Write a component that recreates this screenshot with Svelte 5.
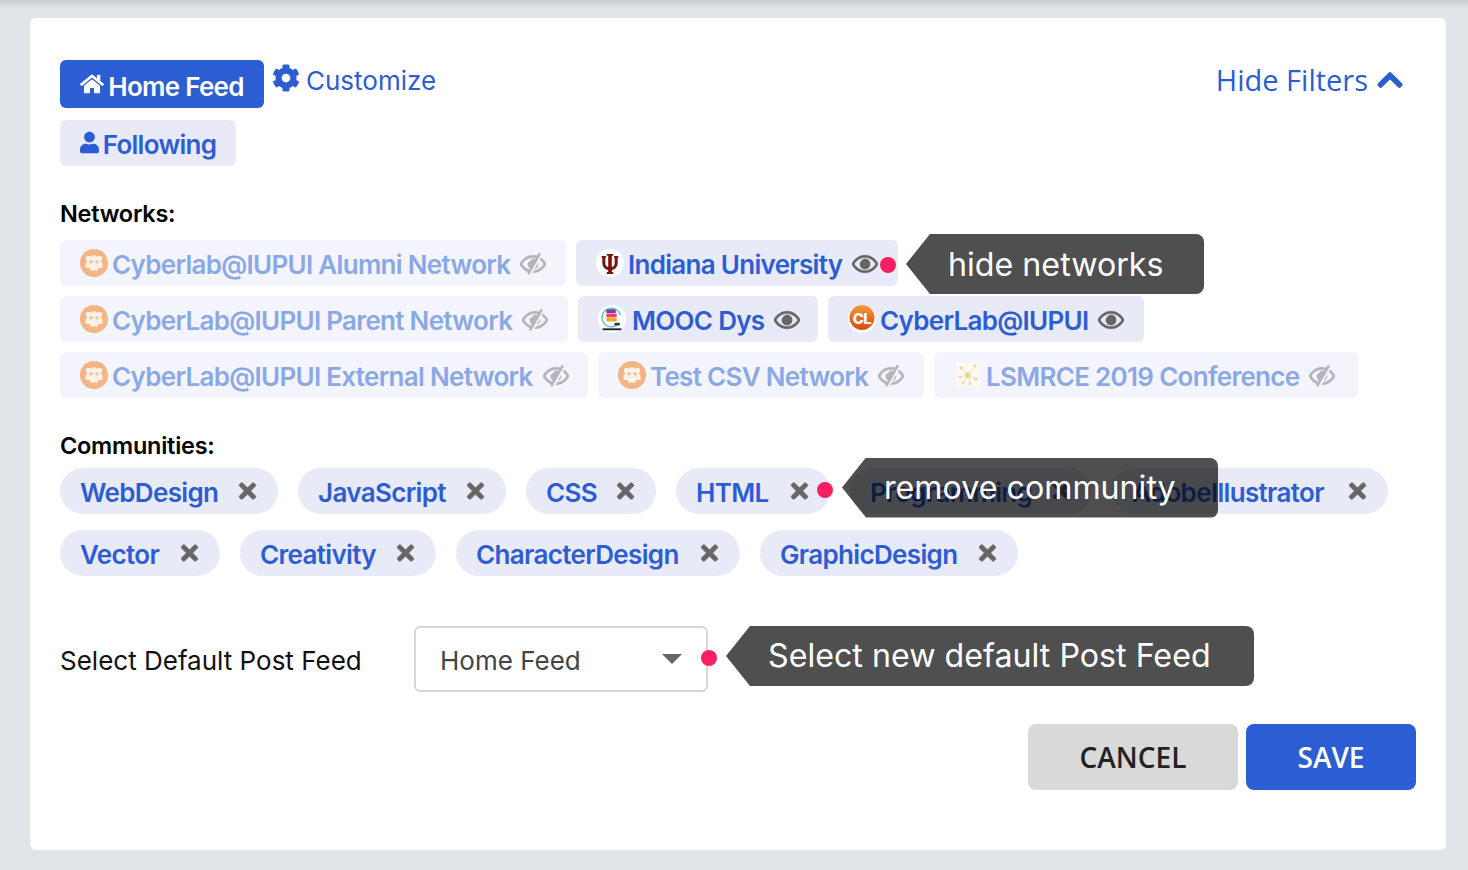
<script>
  const networksRows = [
    [
      { name: 'Cyberlab@IUPUI Alumni Network', logo: 'group', off: true, w: 506 },
      { name: 'Indiana University', logo: 'iu', off: false, w: 322, dot: true }
    ],
    [
      { name: 'CyberLab@IUPUI Parent Network', logo: 'group', off: true, w: 508 },
      { name: 'MOOC Dys', logo: 'mooc', off: false, w: 240 },
      { name: 'CyberLab@IUPUI', logo: 'cl', off: false, w: 316 }
    ],
    [
      { name: 'CyberLab@IUPUI External Network', logo: 'group', off: true, w: 528 },
      { name: 'Test CSV Network', logo: 'group', off: true, w: 326 },
      { name: 'LSMRCE 2019 Conference', logo: 'lsm', off: true, w: 424 }
    ]
  ];
  const communityRows = [
    [
      { name: 'WebDesign', w: 218 },
      { name: 'JavaScript', w: 208 },
      { name: 'CSS', w: 130 },
      { name: 'HTML', w: 154 },
      { name: 'Programming', w: 242 },
      { name: 'AdobeIllustrator', w: 276 }
    ],
    [
      { name: 'Vector', w: 160 },
      { name: 'Creativity', w: 196 },
      { name: 'CharacterDesign', w: 284 },
      { name: 'GraphicDesign', w: 258 }
    ]
  ];
  const eyePath = 'M288 144a110.94 110.94 0 0 0-31.24 5 55.4 55.4 0 0 1 7.24 27 56 56 0 0 1-56 56 55.4 55.4 0 0 1-27-7.24A111.71 111.71 0 1 0 288 144zm284.52 97.4C518.29 135.59 410.93 64 288 64S57.68 135.64 3.48 241.41a32.35 32.35 0 0 0 0 29.19C57.71 376.41 165.07 448 288 448s230.32-71.64 284.52-177.41a32.35 32.35 0 0 0 0-29.19zM288 400c-98.65 0-189.09-55-237.93-144C98.91 167 189.34 112 288 112s189.09 55 237.93 144C477.1 345 386.66 400 288 400z';
</script>

{#snippet logo(kind)}
  {#if kind === 'group'}
    <svg class="logo" viewBox="0 0 28 28">
      <circle cx="14" cy="14" r="14" fill="#f2b583" />
      <g fill="#fdf1e6">
        <circle cx="8.500" cy="9.500" r="2.700" /><circle cx="19.500" cy="9.500" r="2.700" />
        <path d="M5.500 19v-4c0-1.800 1.300-2.800 3-2.800.5 0 1 .1 1.500.3V19zM22.500 19v-4c0-1.800-1.300-2.800-3-2.800-.5 0-1 .1-1.500.3V19z" />
        <circle cx="14" cy="9.500" r="3.300" />
        <path d="M10 21.500v-5c0-2.300 1.700-3.500 4-3.500s4 1.200 4 3.500v5z" />
      </g>
    </svg>
  {:else if kind === 'iu'}
    <svg class="logo" viewBox="0 0 28 28">
      <circle cx="14" cy="14" r="14" fill="#fff" />
      <g fill="none" stroke="#7d110c">
        <path stroke-width="3.600" d="M14 6v18" />
        <path stroke-width="3" d="M7.800 7.500V14c0 3.500 2.500 5.800 6.200 5.800s6.200-2.300 6.200-5.800V7.500" />
        <path stroke-width="1.800" d="M10.800 5.800h6.400M5.600 7.800h4.400M18 7.800h4.400M10.800 24h6.400" />
      </g>
    </svg>
  {:else if kind === 'mooc'}
    <svg class="logo mooc" viewBox="0 0 30 30">
      <circle cx="15" cy="15" r="15" fill="#fff" />
      <path d="M21 21A10 10 0 1 1 24 11" fill="none" stroke="#69bfd3" stroke-width="1.500" />
      <rect x="9" y="4.500" width="10" height="4.200" rx="1" fill="#7e3f8c" />
      <rect x="9" y="9" width="11" height="4.200" rx="1" fill="#e8417b" />
      <rect x="9" y="13.500" width="11" height="4.200" rx="1" fill="#f4a62a" />
      <rect x="17.500" y="19" width="6" height="3" rx="1.500" fill="#2b3a55" />
      <rect x="5" y="25" width="20" height="2" fill="#222" />
    </svg>
  {:else if kind === 'cl'}
    <svg class="logo" viewBox="0 0 28 28">
      <defs>
        <linearGradient id="clg" x1="0" y1="0" x2="0" y2="1">
          <stop offset="0" stop-color="#f29a3a" />
          <stop offset="1" stop-color="#d9480f" />
        </linearGradient>
      </defs>
      <circle cx="14" cy="14" r="14" fill="#fff" />
      <circle cx="14" cy="12.500" r="12.500" fill="url(#clg)" />
      <text x="14" y="18.500" text-anchor="middle" class="cl">CL</text>
    </svg>
  {:else}
    <svg class="logo lsm" viewBox="0 0 28 28">
      <rect x="2" y="2" width="24" height="24" fill="#fbfaf2" />
      <g stroke="#efe3bd" stroke-width="1">
        <path d="M14 14L7 7M14 14L21 5M14 14L6 16M14 14L22 18M14 14L9 22M14 14L16 23" />
      </g>
      <g fill="#efd699">
        <circle cx="14" cy="14" r="3" /><circle cx="7" cy="7" r="1.800" /><circle cx="21" cy="5" r="1.600" />
        <circle cx="6" cy="16" r="1.400" /><circle cx="22" cy="18" r="1.800" /><circle cx="9" cy="22" r="1.400" /><circle cx="16" cy="23" r="1.400" />
      </g>
    </svg>
  {/if}
{/snippet}

<div class="shade"></div>
<main class="card">
  <header class="top">
    <div class="tabs">
      <div class="tabline">
        <button class="tab active">
          <svg class="home" viewBox="0 0 576 512"><path fill="currentColor" d="M280.37 148.26L96 300.11V464a16 16 0 0 0 16 16l112.06-.29a16 16 0 0 0 15.92-16V368a16 16 0 0 1 16-16h64a16 16 0 0 1 16 16v95.64a16 16 0 0 0 16 16.05L464 480a16 16 0 0 0 16-16V300L295.67 148.26a12.19 12.19 0 0 0-15.3 0zM571.6 251.47L488 182.56V44.05a12 12 0 0 0-12-12h-56a12 12 0 0 0-12 12v72.61L318.47 43a48 48 0 0 0-61 0L4.34 251.47a12 12 0 0 0-1.6 16.9l25.5 31A12 12 0 0 0 45.15 301l235.22-193.74a12.19 12.19 0 0 1 15.3 0L530.9 301a12 12 0 0 0 16.9-1.6l25.5-31a12 12 0 0 0-1.7-16.93z" /></svg>
          <span>Home Feed</span>
        </button>
        <a class="customize" href="#customize">
          <svg class="cog" viewBox="0 0 512 512"><path fill="currentColor" d="M487.4 315.7l-42.6-24.6c4.3-23.2 4.3-47 0-70.2l42.6-24.6c4.9-2.8 7.1-8.6 5.5-14-11.1-35.6-30-67.8-54.7-94.6-3.8-4.1-10-5.1-14.8-2.3L380.8 110c-17.9-15.4-38.5-27.3-60.8-35.1V25.8c0-5.6-3.9-10.5-9.4-11.7-36.7-8.2-74.3-7.8-109.2 0-5.5 1.2-9.4 6.1-9.4 11.7V75c-22.2 7.9-42.8 19.8-60.8 35.1L88.7 85.500c-4.9-2.800-11-1.900-14.800 2.300-24.700 26.700-43.600 58.900-54.700 94.600-1.700 5.400.6 11.200 5.500 14L67.300 221c-4.300 23.200-4.300 47 0 70.200l-42.600 24.600c-4.900 2.800-7.100 8.600-5.500 14 11.100 35.600 30 67.800 54.700 94.600 3.800 4.100 10 5.100 14.800 2.300l42.600-24.600c17.900 15.400 38.500 27.300 60.800 35.100v49.200c0 5.600 3.900 10.500 9.400 11.700 36.700 8.200 74.300 7.800 109.200 0 5.500-1.200 9.400-6.100 9.400-11.700v-49.200c22.200-7.900 42.800-19.800 60.800-35.100l42.600 24.600c4.900 2.800 11 1.900 14.800-2.300 24.700-26.700 43.600-58.900 54.700-94.600 1.500-5.500-.7-11.300-5.600-14.100zM256 336c-44.100 0-80-35.900-80-80s35.900-80 80-80 80 35.900 80 80-35.900 80-80 80z" /></svg>
          <span>Customize</span>
        </a>
      </div>
      <button class="tab following">
        <svg class="user" viewBox="0 0 448 512"><path fill="currentColor" d="M224 256c70.7 0 128-57.3 128-128S294.7 0 224 0 96 57.300 96 128s57.300 128 128 128zm89.600 32h-16.700c-22.200 10.200-46.900 16-72.900 16s-50.600-5.800-72.900-16h-16.700C60.200 288 0 348.200 0 422.400V464c0 26.500 21.500 48 48 48h352c26.500 0 48-21.500 48-48v-41.600c0-74.200-60.200-134.400-134.400-134.400z" /></svg>
        <span>Following</span>
      </button>
    </div>
    <a class="hide" href="#hide">
      Hide Filters
      <svg class="chev" viewBox="0 0 448 512"><path fill="currentColor" stroke="currentColor" stroke-width="24" d="M240.971 130.524l194.343 194.343c9.373 9.373 9.373 24.569 0 33.941l-22.667 22.667c-9.357 9.357-24.522 9.375-33.901.04L224 227.495 69.255 381.516c-9.379 9.335-24.544 9.317-33.901-.04l-22.667-22.667c-9.373-9.373-9.373-24.569 0-33.941L207.03 130.525c9.372-9.373 24.568-9.373 33.941-.001z" /></svg>
    </a>
  </header>

  <section class="networks">
    <h2>Networks:</h2>
    {#each networksRows as row}
      <div class="net-row">
        {#each row as n}
          <div class="net" class:off={n.off} style="width:{n.w}px">
            {@render logo(n.logo)}
            <span class="net-name">{n.name}</span>
            <svg class="eye" viewBox="0 0 576 512">
              <path fill="currentColor" stroke="currentColor" stroke-width="14" d={eyePath} />
              {#if n.off}
                <path d="M470 20L200 500" stroke="#f4f5fc" stroke-width="90" fill="none" />
                <path d="M440 20L180 480" stroke="currentColor" stroke-width="56" fill="none" />
                <path fill="currentColor" d="M345 150L225 362C190 330 175 290 180 250 195 190 270 145 345 150z" />
              {:else}
                <circle cx="288" cy="256" r="112" fill="currentColor" />
              {/if}
            </svg>
            {#if n.dot}<span class="dot dot-net"></span>{/if}
          </div>
        {/each}
      </div>
    {/each}
    <div class="tip tip-net"><span>hide networks</span></div>
  </section>

  <section class="communities">
    <h2>Communities:</h2>
    <div class="com-wrap">
      {#each communityRows as row}
        <div class="com-row">
          {#each row as c}
            <div class="com" style="width:{c.w}px">
              <span>{c.name}</span>
              <svg class="x" viewBox="0 0 352 512"><path fill="currentColor" stroke="currentColor" stroke-width="14" d="M242.72 256l100.07-100.07c12.28-12.28 12.28-32.19 0-44.48l-22.24-22.24c-12.28-12.28-32.19-12.28-44.48 0L176 189.28 75.93 89.21c-12.28-12.28-32.19-12.28-44.48 0L9.21 111.45c-12.28 12.28-12.28 32.19 0 44.48L109.28 256 9.21 356.07c-12.28 12.28-12.28 32.19 0 44.48l22.24 22.24c12.28 12.28 32.2 12.28 44.48 0L176 322.72l100.07 100.07c12.28 12.28 32.2 12.28 44.48 0l22.24-22.24c12.28-12.28 12.28-32.19 0-44.48L242.72 256z" /></svg>
              {#if c.name === 'HTML'}<span class="dot dot-com"></span>{/if}
            </div>
          {/each}
        </div>
      {/each}
      <div class="tip tip-com"><span>remove community</span></div>
    </div>
  </section>

  <section class="default">
    <label class="sel-label" for="feed">Select Default Post Feed</label>
    <div class="select" id="feed">
      <span>Home Feed</span>
      <i class="caret"></i>
      <span class="dot dot-sel"></span>
      <div class="tip tip-sel"><span>Select new default Post Feed</span></div>
    </div>
  </section>

  <footer class="actions">
    <button class="btn cancel">CANCEL</button>
    <button class="btn save">SAVE</button>
  </footer>
</main>

<style>
  :global(body) {
    margin: 0;
    background: #e1e4e8;
    font-family: Inter, "Liberation Sans", sans-serif;
  }
  .shade {
    position: absolute;
    left: 0;
    right: 0;
    top: 0;
    height: 8px;
    background: linear-gradient(#c9ccd1, #e1e4e8);
  }
  .card {
    position: relative;
    box-sizing: border-box;
    width: 1416px;
    height: 832px;
    margin: 18px 0 0 30px;
    padding: 42px 30px 0;
    background: #fff;
    border-radius: 6px;
  }
  .top {
    display: flex;
    justify-content: space-between;
    align-items: flex-start;
    height: 106px;
  }
  .tabline {
    display: flex;
    align-items: flex-start;
    gap: 8px;
    margin-bottom: 12px;
  }
  .tab {
    display: flex;
    align-items: center;
    justify-content: center;
    gap: 4px;
    border: 0;
    border-radius: 6px;
    padding: 0;
    font: 600 26px/1 Inter, sans-serif;
    letter-spacing: -0.72px;
  }
  .tab span { padding-top: 6px; }
  .following span { padding-top: 3px; }
  .active {
    width: 204px;
    height: 48px;
    background: #2d5dd2;
    color: #fff;
  }
  .following {
    width: 176px;
    height: 46px;
    background: #e9eaf7;
    color: #2d5dd2;
  }
  .home { width: 24px; height: 22px; margin-left: 0; }
  .user { width: 19px; height: 23px; margin-top: -2px; }
  .customize {
    display: flex;
    align-items: center;
    gap: 6px;
    height: 40px;
    color: #2d5dd2;
    text-decoration: none;
    font-size: 26px;
  }
  .cog { width: 28px; height: 28px; margin-top: -4px; }
  .hide {
    display: flex;
    align-items: center;
    gap: 9px;
    height: 38px;
    margin-right: 13px;
    color: #2d5dd2;
    text-decoration: none;
    font: 29px "Open Sans", sans-serif;
  }
  .chev { width: 26px; height: 28px; margin-top: 2px; }
  h2 {
    margin: 0;
    font: 600 23.500px/1 Inter, sans-serif;
    color: #000;
    letter-spacing: -0.25px;
  }
  .networks {
    position: relative;
    padding-top: 36px;
    height: 268px;
    box-sizing: border-box;
  }
  .networks h2 { margin-bottom: 14px; }
  .net-row {
    display: flex;
    gap: 10px;
    margin-bottom: 10px;
  }
  .net {
    position: relative;
    box-sizing: border-box;
    display: flex;
    align-items: center;
    height: 46px;
    padding-left: 20px;
    border-radius: 6px;
    background: #e9eaf7;
    color: #2d5dd2;
    font-size: 26px;
    font-weight: 600;
    letter-spacing: -0.7px;
  }
  .net.off {
    background: #f4f5fc;
    color: #8aa8e6;
  }
  .net-name {
    margin-left: 4px;
    padding-top: 4px;
    white-space: nowrap;
  }
  .logo {
    flex: none;
    width: 28px;
    height: 28px;
  }
  .mooc { margin-right: 2px; }
  .cl {
    font: 800 15px Inter, sans-serif;
    fill: #fff;
    letter-spacing: -0.5px;
  }
  .eye {
    flex: none;
    width: 26px;
    height: 24px;
    margin-left: 10px;
    margin-top: 3px;
    color: #666;
  }
  .off .eye { color: #b4b4bc; }
  .dot {
    position: absolute;
    width: 16px;
    height: 16px;
    border-radius: 50%;
    background: #fa1f63;
  }
  .dot-net { right: 2px; top: 17px; }
  .dot-com { right: -3px; top: 14px; }
  .dot-sel { right: -11px; top: 22px; }
  .tip {
    position: absolute;
    z-index: 3;
    display: flex;
    align-items: center;
    box-sizing: border-box;
    background: rgba(0, 0, 0, 0.69);
    color: #fff;
    font: 400 32.200px/1 Inter, sans-serif;
    border-radius: 8px;
    clip-path: polygon(0 50%, 24px 0, 100% 0, 100% 100%, 24px 100%);
    white-space: nowrap;
  }
  .tip span { padding-top: 2px; }
  .tip-sel span { padding-top: 0; }
  .tip-net {
    left: 846px;
    top: 68px;
    width: 298px;
    height: 60px;
    padding-left: 42px;
  }
  .communities {
    position: relative;
    height: 192px;
  }
  .communities h2 { margin-bottom: 10px; }
  .com-wrap { position: relative; }
  .com-row {
    display: flex;
    gap: 20px;
    margin-bottom: 16px;
  }
  .com {
    position: relative;
    display: flex;
    align-items: center;
    justify-content: space-between;
    box-sizing: border-box;
    height: 46px;
    padding: 0 21px 0 20px;
    border-radius: 23px;
    background: #e9eaf7;
    color: #2d5dd2;
    font-size: 26px;
    font-weight: 600;
    letter-spacing: -0.66px;
  }
  .com span:first-child { padding-top: 4px; }
  .x {
    width: 19px;
    height: 24px;
    color: #666;
  }
  .tip-com {
    left: 782px;
    top: -10px;
    width: 376px;
    height: 60px;
    padding-left: 42px;
  }
  .default {
    display: flex;
    align-items: center;
    height: 66px;
  }
  .sel-label {
    width: 354px;
    font-size: 26px;
    color: #111;
    padding-top: 2px;
  }
  .select {
    position: relative;
    box-sizing: border-box;
    display: flex;
    align-items: center;
    justify-content: space-between;
    width: 294px;
    height: 66px;
    padding: 0 26px 0 24px;
    border: 2px solid #d6d6d6;
    border-radius: 6px;
    color: #444;
    font-size: 26px;
  }
  .select > span:first-child { padding-top: 2px; }
  .caret {
    width: 0;
    height: 0;
    border-left: 10px solid transparent;
    border-right: 10px solid transparent;
    border-top: 10px solid #666;
    margin-right: -2px;
  }
  .tip-sel {
    left: 310px;
    top: -2px;
    width: 528px;
    height: 60px;
    padding-left: 42px;
  }
  .actions {
    display: flex;
    justify-content: flex-end;
    gap: 8px;
    margin-top: 32px;
  }
  .btn {
    height: 66px;
    border: 0;
    border-radius: 8px;
    font: 600 28px "Open Sans", sans-serif;
  }
  .cancel { width: 210px; background: #d9d9d9; color: #222; }
  .save { width: 170px; background: #2d5dd2; color: #fff; }
</style>
